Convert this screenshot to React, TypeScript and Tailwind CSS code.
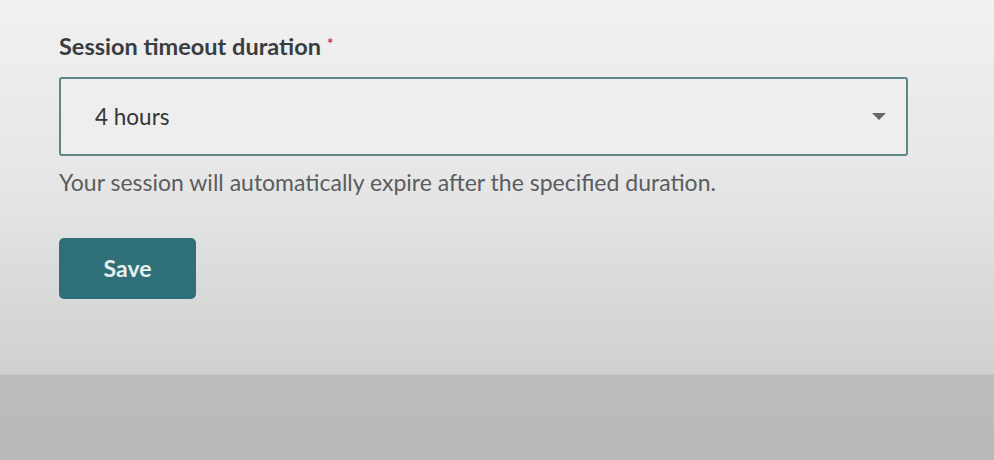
import React, { useState } from 'react';

export default function App() {
  const [duration, setDuration] = useState('4 hours');

  return (
    <div className="w-[994px] h-[460px] flex flex-col font-['Lato','Open_Sans',sans-serif]">
      {/* settings panel */}
      <div className="h-[375px] bg-gradient-to-b from-[#f1f1f1] via-[#e6e6e6] to-[#d0d0d0] pl-[59px] pt-[31px] border-b border-[#c6c6c6]">
        <label className="flex items-start text-[23.5px] leading-[30px] font-bold text-[#3a3d3f]">
          Session timeout duration
          <span className="ml-[6px] mt-[2px] text-[15px] leading-[20px] text-[#b83a3a]">*</span>
        </label>

        <div className="relative mt-[16px] w-[849px] h-[79px]">
          <div className="h-full flex items-center justify-between rounded-[3px] border-2 border-[#5c8784] bg-[#eeeeee] pl-[34px] pr-[20px] text-[22.5px] text-[#333537]">
            <span>{duration}</span>
            <svg width="14" height="8" viewBox="0 0 14 8" className="fill-[#666666]">
              <path d="M0 0 L14 0 L7 7 Z" />
            </svg>
          </div>
        </div>

        <p className="mt-[12px] text-[23px] leading-[28px] text-[#5a5d60]">
          Your session will automatically expire after the specified duration.
        </p>

        <button
          onClick={() => setDuration('4 hours')}
          className="mt-[42px] w-[137px] h-[61px] rounded-[5px] bg-[#2f6f78] text-[#e6f0f0] text-[23px] font-bold"
        >
          Save
        </button>
      </div>

      {/* footer strip */}
      <div className="flex-1 bg-gradient-to-b from-[#bbbcbd] to-[#b8b9bb]" />
    </div>
  );
}
